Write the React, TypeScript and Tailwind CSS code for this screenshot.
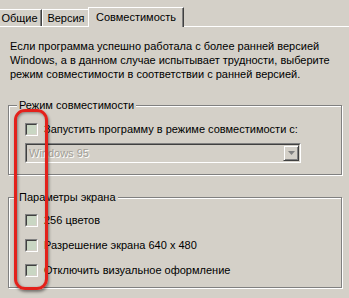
import React from "react";

const Check = () => (
  <span className="w-[13px] h-[13px] shrink-0 border border-t-[#808080] border-l-[#808080] border-b-white border-r-white">
    <span className="block w-full h-full border border-t-[#404040] border-l-[#404040] border-b-[#d4d0c8] border-r-[#d4d0c8] bg-[#c9d6c3]" />
  </span>
);

const CheckRow = ({ label }: { label: string }) => (
  <div className="flex items-center gap-[6px] h-[14px]">
    <Check />
    <span>{label}</span>
  </div>
);

const Group = ({
  title,
  className,
  children,
}: {
  title: string;
  className?: string;
  children: React.ReactNode;
}) => (
  <div
    className={`ml-[8px] w-[334px] border border-[#808080] shadow-[inset_1px_1px_0_#fff,1px_1px_0_#fff] pl-[16px] ${className ?? ""}`}
  >
    <div className="-mt-[8px] -ml-[8px] w-fit px-[2px] h-[14px] leading-[14px] bg-[#d4d0c8]">
      {title}
    </div>
    {children}
  </div>
);

const Tab = ({ label, className }: { label: string; className?: string }) => (
  <div
    className={`h-[17px] flex items-center justify-center border-t border-l border-white border-r border-r-[#404040] shadow-[inset_-1px_0_0_#808080] ${className ?? ""}`}
  >
    {label}
  </div>
);

export default function App() {
  return (
    <div className="relative w-[349px] h-[298px] overflow-hidden bg-[#d4d0c8] text-black text-[11px] leading-[14px] font-['Liberation_Sans',Arial,sans-serif]">
      <div className="flex items-end h-[27px] border-b border-white -ml-[3px]">
        <Tab label="Общие" className="w-[45px]" />
        <Tab label="Версия" className="w-[48px]" />
        <div className="-ml-[2px] w-[96px] h-[20px] -mb-[1px] bg-[#d4d0c8] flex items-start justify-center pt-[2px] border-t border-l border-white border-r border-r-[#404040] shadow-[inset_-1px_0_0_#808080]">
          Совместимость
        </div>
      </div>

      <p className="ml-[10px] mt-[12px]">
        Если программа успешно работала с более ранней версией
        <br />
        Windows, а в данном случае испытывает трудности, выберите
        <br />
        режим совместимости в соответствии с ранней версией.
      </p>

      <Group title="Режим совместимости" className="mt-[24px] pb-[11px]">
        <div className="mt-[10px]">
          <CheckRow label="Запустить программу в режиме совместимости с:" />
        </div>
        <div className="mt-[7px] w-[276px] h-[20px] border border-t-[#808080] border-l-[#808080] border-b-white border-r-white">
          <div className="h-full flex items-center border border-t-[#404040] border-l-[#404040] border-b-[#d4d0c8] border-r-[#d4d0c8]">
            <span className="flex-1 pl-[2px] text-[#a19e96] [text-shadow:1px_1px_0_#fff]">
              Windows 95
            </span>
            <span className="w-[16px] h-[16px] flex items-center justify-center border border-t-[#d4d0c8] border-l-[#d4d0c8] border-b-[#404040] border-r-[#404040] shadow-[inset_1px_1px_0_#fff,inset_-1px_-1px_0_#808080]">
              <svg width="7" height="4" viewBox="0 0 7 4">
                <path d="M0 0h7L3.5 4z" fill="#808080" />
              </svg>
            </span>
          </div>
        </div>
      </Group>

      <Group title="Параметры экрана" className="mt-[22px] pb-[10px]">
        <div className="mt-[9px] flex flex-col gap-[11px]">
          <CheckRow label="256 цветов" />
          <CheckRow label="Разрешение экрана 640 x 480" />
          <CheckRow label="Отключить визуальное оформление" />
        </div>
      </Group>

      <div className="absolute left-[14px] top-[109px] w-[34px] h-[181px] rounded-[11px] border-[3px] border-[#e3211b] shadow-[1px_2px_3px_rgba(0,0,0,0.45),inset_1px_1px_3px_rgba(0,0,0,0.4)]" />
    </div>
  );
}
